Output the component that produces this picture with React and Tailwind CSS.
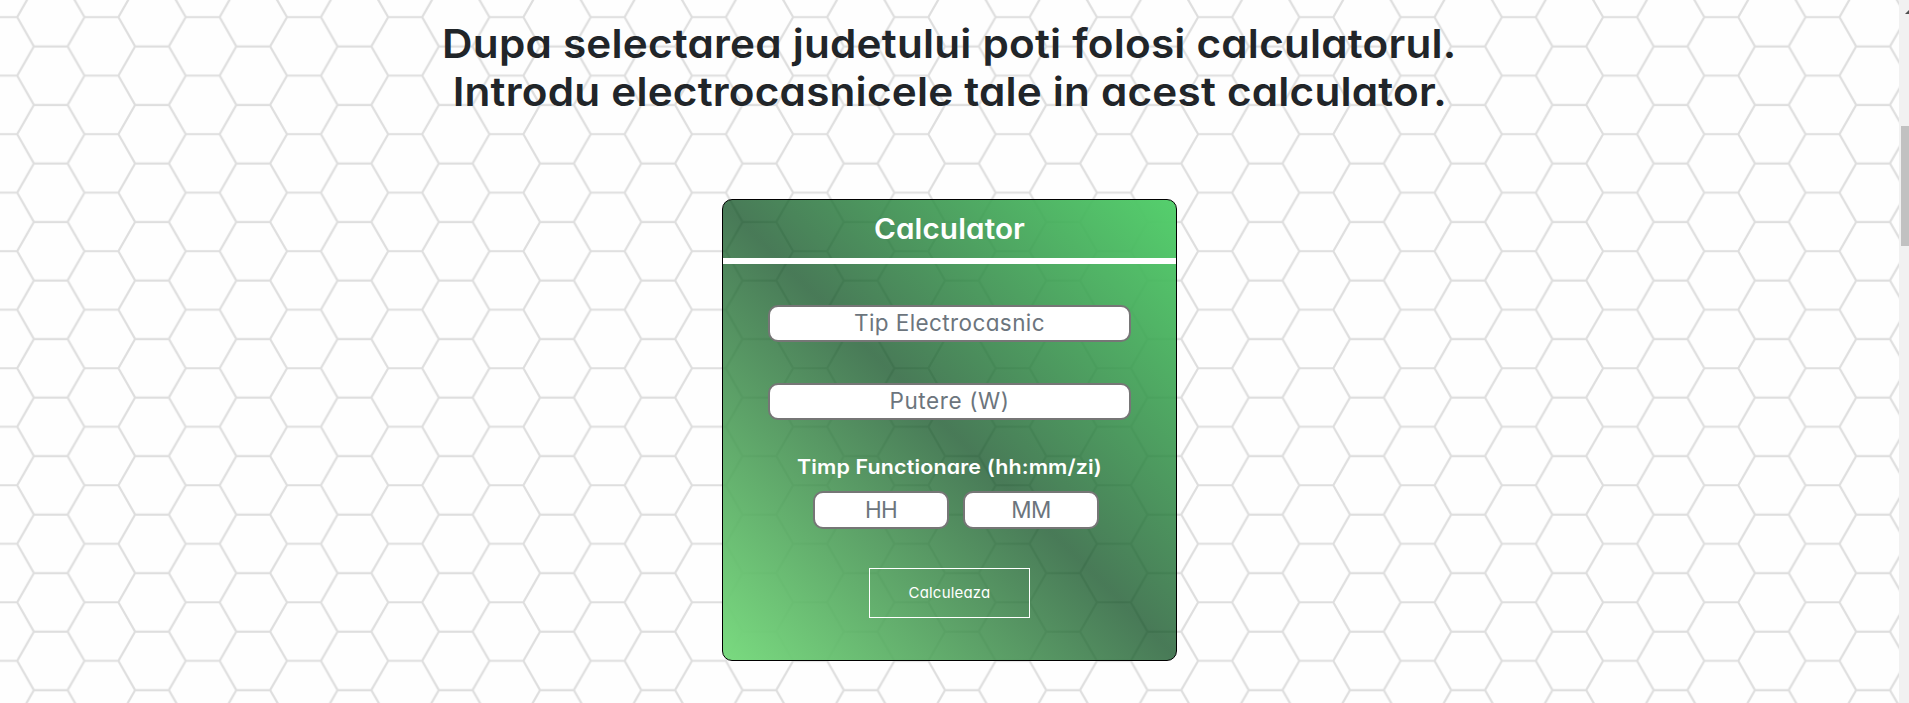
const hex = "M-16.9 17.1H17.2L33.9 46.4H67.6L84.5 17.1H118.4M33.9 46.4L17.2 75.6H-16.9M67.6 46.4L84.5 75.6H118.4M17.2 17.1L33.9 -12.1H67.6L84.5 17.1";

function Field({ placeholder, className }) {
  return (
    <input
      placeholder={placeholder}
      className={`rounded-[10px] border-2 border-[#767676] bg-white px-0.5 pb-0.5 text-center text-[22.5px] font-[380] outline-none placeholder:text-[#6c757d] placeholder:opacity-100 ${className}`}
    />
  );
}

export default function App() {
  return (
    <div className="relative isolate flex h-[703px] w-full overflow-hidden bg-[#fefefe] font-['Inter','Open_Sans',sans-serif] [font-feature-settings:'cv11'_1]">
      <svg className="absolute inset-0 -z-10 h-full w-full" aria-hidden="true">
        <defs>
          <pattern id="hex" width="101.24" height="58.52" patternUnits="userSpaceOnUse">
            <path d={hex} fill="none" stroke="#dedede" strokeWidth="2.2" />
          </pattern>
        </defs>
        <rect width="100%" height="100%" fill="url(#hex)" />
      </svg>
      <main className="flex flex-1 flex-col items-center">
        <h1 className="mt-5 flex flex-col items-center text-[40px] font-semibold leading-[48px] text-[#212529]">
          <span className="scale-x-[1.056] tracking-[0.2px]">Dupa selectarea judetului poti folosi calculatorul.</span>
          <span className="scale-x-[1.056] tracking-[0.2px]">Introdu electrocasnicele tale in acest calculator.</span>
        </h1>
        <section className="mt-[83px] flex h-[462px] w-[455px] flex-col items-center rounded-[10px] border border-black bg-[linear-gradient(45deg,#7adb80_0%,rgba(9,76,29,0.74)_50%,#55d06d_100%)] bg-origin-border text-white">
          <h2 className="flex h-[58px] w-full scale-x-[1.06] items-center justify-center pb-px text-[28px] font-semibold tracking-[0.1px]">Calculator</h2>
          <div className="h-1.5 w-full bg-white" />
          <Field placeholder="Tip Electrocasnic" className="mt-[41px] h-[37px] w-[363px] tracking-[0.4px]" />
          <Field placeholder="Putere (W)" className="mt-[41px] h-[37px] w-[363px] tracking-[0.6px]" />
          <p className="mt-8 scale-x-[1.07] text-[20px] font-semibold leading-[30px] tracking-[0.15px]">Timp Functionare (hh:mm/zi)</p>
          <div className="mt-[9px] flex gap-[14px] pl-[13px]">
            <Field placeholder="HH" className="h-[38px] w-[136px] tracking-[-0.8px]" />
            <Field placeholder="MM" className="h-[38px] w-[136px] tracking-[-0.5px]" />
          </div>
          <button className="mt-[39px] h-[50px] w-[161px] border border-white text-[15px] tracking-[0.2px]">Calculeaza</button>
        </section>
      </main>
      <aside className="flex w-[10px] flex-col overflow-hidden bg-[#f1f1f1] pl-0.5">
        <svg className="mt-[9px] h-[5px] w-2" viewBox="0 0 8 5"><path d="M4 5L8 1V5Z" fill="#505050" /></svg>
        <div className="mt-[112px] h-[120px] w-full bg-[#c1c1c1]" />
      </aside>
    </div>
  );
}
